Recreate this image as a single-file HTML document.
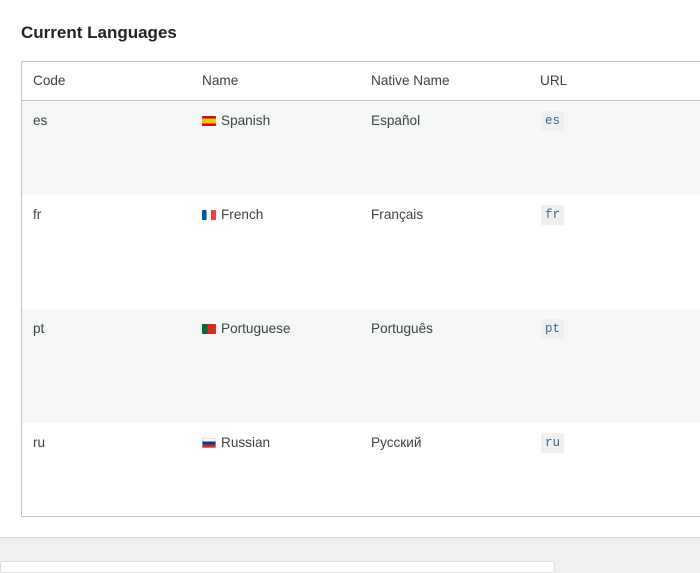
<!DOCTYPE html>
<html><head><meta charset="utf-8"><style>
body{margin:0;width:700px;height:566px;overflow:hidden;background:#f0f0f1;font-family:"Liberation Sans",sans-serif;color:#3c434a;}
.panel{position:absolute;left:0;top:0;width:700px;height:537px;background:#fff;border-bottom:1px solid #dcdcde;}
h2{position:absolute;left:21px;top:23px;margin:0;font-size:17px;font-weight:600;color:#1d2327;}
.tbl{position:absolute;left:21px;top:61px;width:690px;height:454px;border:1px solid #c3c4c7;}
.hdr{position:absolute;left:0;top:0;width:100%;height:38px;border-bottom:1px solid #c3c4c7;}
.row{position:absolute;left:0;width:100%;}
.c{position:absolute;font-size:13.6px;}
.alt{background:#f6f7f7;}
code{font-family:"Liberation Mono",monospace;font-size:12.5px;background:#f0f0f1;color:#3a6a92;padding:3px 4px;}
.flag{display:inline-block;width:14px;height:10px;vertical-align:-1px;margin-right:5px;border-radius:1px;}
.bot{position:absolute;left:0;top:561px;width:553px;height:10px;background:#fff;border:1px solid #dcdcde;border-radius:3px;}
</style></head><body>
<div class="panel"></div>
<h2>Current Languages</h2>
<div class="tbl">
<div class="hdr"><span class="c" style="left:11px;top:11px">Code</span><span class="c" style="left:180px;top:11px">Name</span><span class="c" style="left:349px;top:11px">Native Name</span><span class="c" style="left:518px;top:11px">URL</span></div>
<div class="row alt" style="top:39px;height:94px"><span class="c" style="left:11px;top:12px">es</span><span class="c" style="left:180px;top:12px"><span class="flag" style="background:linear-gradient(#c60b1e 25%,#ffc400 25% 75%,#c60b1e 75%)"></span>Spanish</span><span class="c" style="left:349px;top:12px">Español</span><span class="c" style="left:519px;top:11px"><code>es</code></span></div>
<div class="row" style="top:133px;height:114px"><span class="c" style="left:11px;top:12px">fr</span><span class="c" style="left:180px;top:12px"><span class="flag" style="background:linear-gradient(90deg,#0055a4 33%,#fff 33% 66%,#ef4135 66%)"></span>French</span><span class="c" style="left:349px;top:12px">Français</span><span class="c" style="left:519px;top:11px"><code>fr</code></span></div>
<div class="row alt" style="top:247px;height:114px"><span class="c" style="left:11px;top:12px">pt</span><span class="c" style="left:180px;top:12px"><span class="flag" style="background:linear-gradient(90deg,#046a38 40%,#da291c 40%)"></span>Portuguese</span><span class="c" style="left:349px;top:12px">Português</span><span class="c" style="left:519px;top:11px"><code>pt</code></span></div>
<div class="row" style="top:361px;height:93px"><span class="c" style="left:11px;top:12px">ru</span><span class="c" style="left:180px;top:12px"><span class="flag" style="background:linear-gradient(#fff 33%,#0039a6 33% 66%,#d52b1e 66%);box-shadow:inset 0 0 0 0.5px #ccc"></span>Russian</span><span class="c" style="left:349px;top:12px">Русский</span><span class="c" style="left:519px;top:11px"><code>ru</code></span></div>
</div>
<div class="bot"></div>
</body></html>
